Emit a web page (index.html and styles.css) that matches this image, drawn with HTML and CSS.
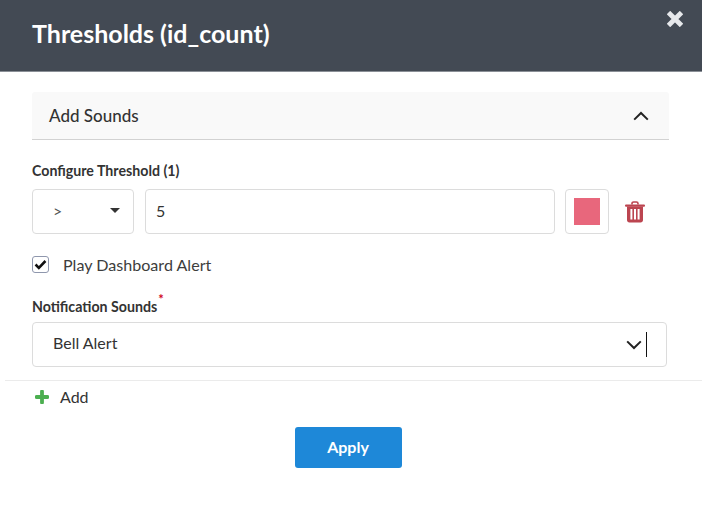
FILE: index.html
```html
<!DOCTYPE html>
<html lang="en">
<head>
  <meta charset="UTF-8">
  <title>Thresholds</title>
  <link rel="stylesheet" href="styles.css">
</head>
<body>
  <header class="modal-header">
    <h1>Thresholds (id_count)</h1>
    <svg class="close-icon" viewBox="0 0 16 16" width="16" height="16">
      <path d="M3.2 3.2 L12.8 12.8 M12.8 3.2 L3.2 12.8" stroke="#e6e8eb" stroke-width="4.8" stroke-linecap="square"/>
    </svg>
  </header>

  <div class="modal-body">
    <div class="section-head">
      <span>Add Sounds</span>
      <svg viewBox="0 0 16 10" width="16" height="10">
        <path d="M1.2 8.6 L8 2 L14.8 8.6" fill="none" stroke="#222" stroke-width="2"/>
      </svg>
    </div>

    <div class="field-label threshold-label">Configure Threshold (1)</div>
    <div class="threshold-row">
      <div class="box op-select">
        <span>&gt;</span>
        <i class="caret"></i>
      </div>
      <div class="box value-input">5</div>
      <div class="box swatch-btn"><div class="swatch"></div></div>
      <svg class="trash" viewBox="0 0 20 22" width="20" height="22">
        <path d="M7 3.5 V2.6 C7 1.6 7.7 1 8.6 1 H11.4 C12.3 1 13 1.6 13 2.6 V3.5" fill="none" stroke="#bc4550" stroke-width="1.6"/>
        <rect x="0" y="3.4" width="20" height="2.4" rx="1" fill="#bc4550"/>
        <path fill-rule="evenodd" fill="#bc4550" d="M2 5.5 H18 V19 C18 20.4 17 21.5 15.6 21.5 H4.4 C3 21.5 2 20.4 2 19 Z M5.4 8 V18.5 H7.4 V8 Z M9 8 V18.5 H11 V8 Z M12.6 8 V18.5 H14.6 V8 Z"/>
      </svg>
    </div>

    <label class="check-row">
      <span class="checkbox">
        <svg viewBox="0 0 14 12" width="13" height="11">
          <path d="M1.6 6 L5.2 9.6 L12.4 2.2" fill="none" stroke="#111" stroke-width="2.8"/>
        </svg>
      </span>
      Play Dashboard Alert
    </label>

    <div class="field-label sounds-label">Notification Sounds<sup class="required">*</sup></div>
    <div class="box sound-select">
      <span class="select-text">Bell Alert</span>
      <svg viewBox="0 0 16 10" width="16" height="10">
        <path d="M1.2 1.4 L8 8 L14.8 1.4" fill="none" stroke="#222" stroke-width="2"/>
      </svg>
      <i class="text-cursor"></i>
    </div>
  </div>

  <div class="add-row">
    <svg viewBox="0 0 14 14" width="14" height="14">
      <path d="M7 1.5 V12.5 M1.5 7 H12.5" stroke="#4caf50" stroke-width="3.8" stroke-linecap="round"/>
    </svg>
    <span>Add</span>
  </div>

  <div class="actions">
    <button class="apply-btn">Apply</button>
  </div>
</body>
</html>
```

FILE: styles.css
```css
body {
  margin: 0;
  background: #fff;
  font-family: "Lato", "Liberation Sans", sans-serif;
  font-size: 16px;
  color: #333;
}

.modal-header {
  height: 72px;
  box-sizing: border-box;
  background: #434a54;
  border-bottom: 1px solid #8a8f96;
  padding: 0 19px 0 32px;
  display: flex;
  justify-content: space-between;
}

.modal-header h1 {
  margin: 0;
  padding-top: 18px;
  font-size: 25px;
  line-height: 30px;
  font-weight: 700;
  color: #fff;
}

.close-icon {
  margin-top: 11px;
}

.modal-body {
  padding: 20px 33px 0 32px;
}

.section-head {
  height: 48px;
  box-sizing: border-box;
  background: #f9f9f9;
  border-bottom: 1px solid #d2d2d2;
  border-radius: 3px 3px 0 0;
  padding: 0 20px 0 17px;
  display: flex;
  align-items: center;
  justify-content: space-between;
  font-size: 17px;
  font-weight: 500;
  color: #333;
}

.field-label {
  font-size: 14.2px;
  line-height: 18px;
  font-weight: 700;
  color: #333;
}

.threshold-label {
  margin-top: 22px;
}

.threshold-row {
  margin-top: 9px;
  display: flex;
  align-items: center;
}

.box {
  height: 45px;
  box-sizing: border-box;
  border: 1px solid #dcdcdc;
  border-radius: 4px;
  display: flex;
  align-items: center;
}

.op-select {
  width: 102px;
  padding: 0 13px 2px 20px;
  justify-content: space-between;
  font-size: 16px;
  color: #555;
}

.caret {
  width: 0;
  height: 0;
  margin-bottom: 1px;
  border-left: 5px solid transparent;
  border-right: 5px solid transparent;
  border-top: 5px solid #333;
}

.value-input {
  width: 410px;
  margin-left: 11px;
  padding: 0 0 3px 10px;
  font-size: 16px;
}

.swatch-btn {
  width: 44px;
  margin-left: 10px;
  justify-content: center;
}

.swatch {
  width: 26px;
  height: 27px;
  background: #e8677c;
}

.trash {
  margin-left: 16px;
}

.check-row {
  margin-top: 21px;
  display: flex;
  align-items: center;
  height: 18px;
  font-size: 16.1px;
  color: #3d3d3d;
}

.checkbox {
  width: 17px;
  height: 17px;
  box-sizing: border-box;
  border: 1px solid #8f97ad;
  border-radius: 3px;
  margin-right: 14px;
  display: flex;
  align-items: center;
  justify-content: center;
}

.sounds-label {
  margin-top: 25px;
}

.required {
  color: #d0021b;
  font-size: 13px;
  line-height: 0;
  margin-left: 1px;
  vertical-align: 8px;
}

.sound-select {
  margin-top: 6px;
  width: 635px;
  height: 45px;
  padding: 0 24px 0 20px;
  position: relative;
  font-size: 16px;
  justify-content: space-between;
}

.select-text {
  padding-bottom: 5px;
}

.text-cursor {
  position: absolute;
  left: 613px;
  top: 9px;
  width: 1px;
  height: 25px;
  background: #111;
}

.add-row {
  margin: 13px 0 0 5px;
  border-top: 1px solid #ebebeb;
  padding: 6px 0 0 30px;
  display: flex;
  align-items: center;
  gap: 11px;
  font-size: 16px;
}

.actions {
  margin-top: 21px;
  padding-right: 6px;
  display: flex;
  justify-content: center;
}

.apply-btn {
  width: 107px;
  height: 41px;
  border: 0;
  border-radius: 3px;
  background: #1e88d8;
  color: #fff;
  font-family: inherit;
  font-size: 16px;
  font-weight: 700;
  padding: 0 0 3px;
}
```
